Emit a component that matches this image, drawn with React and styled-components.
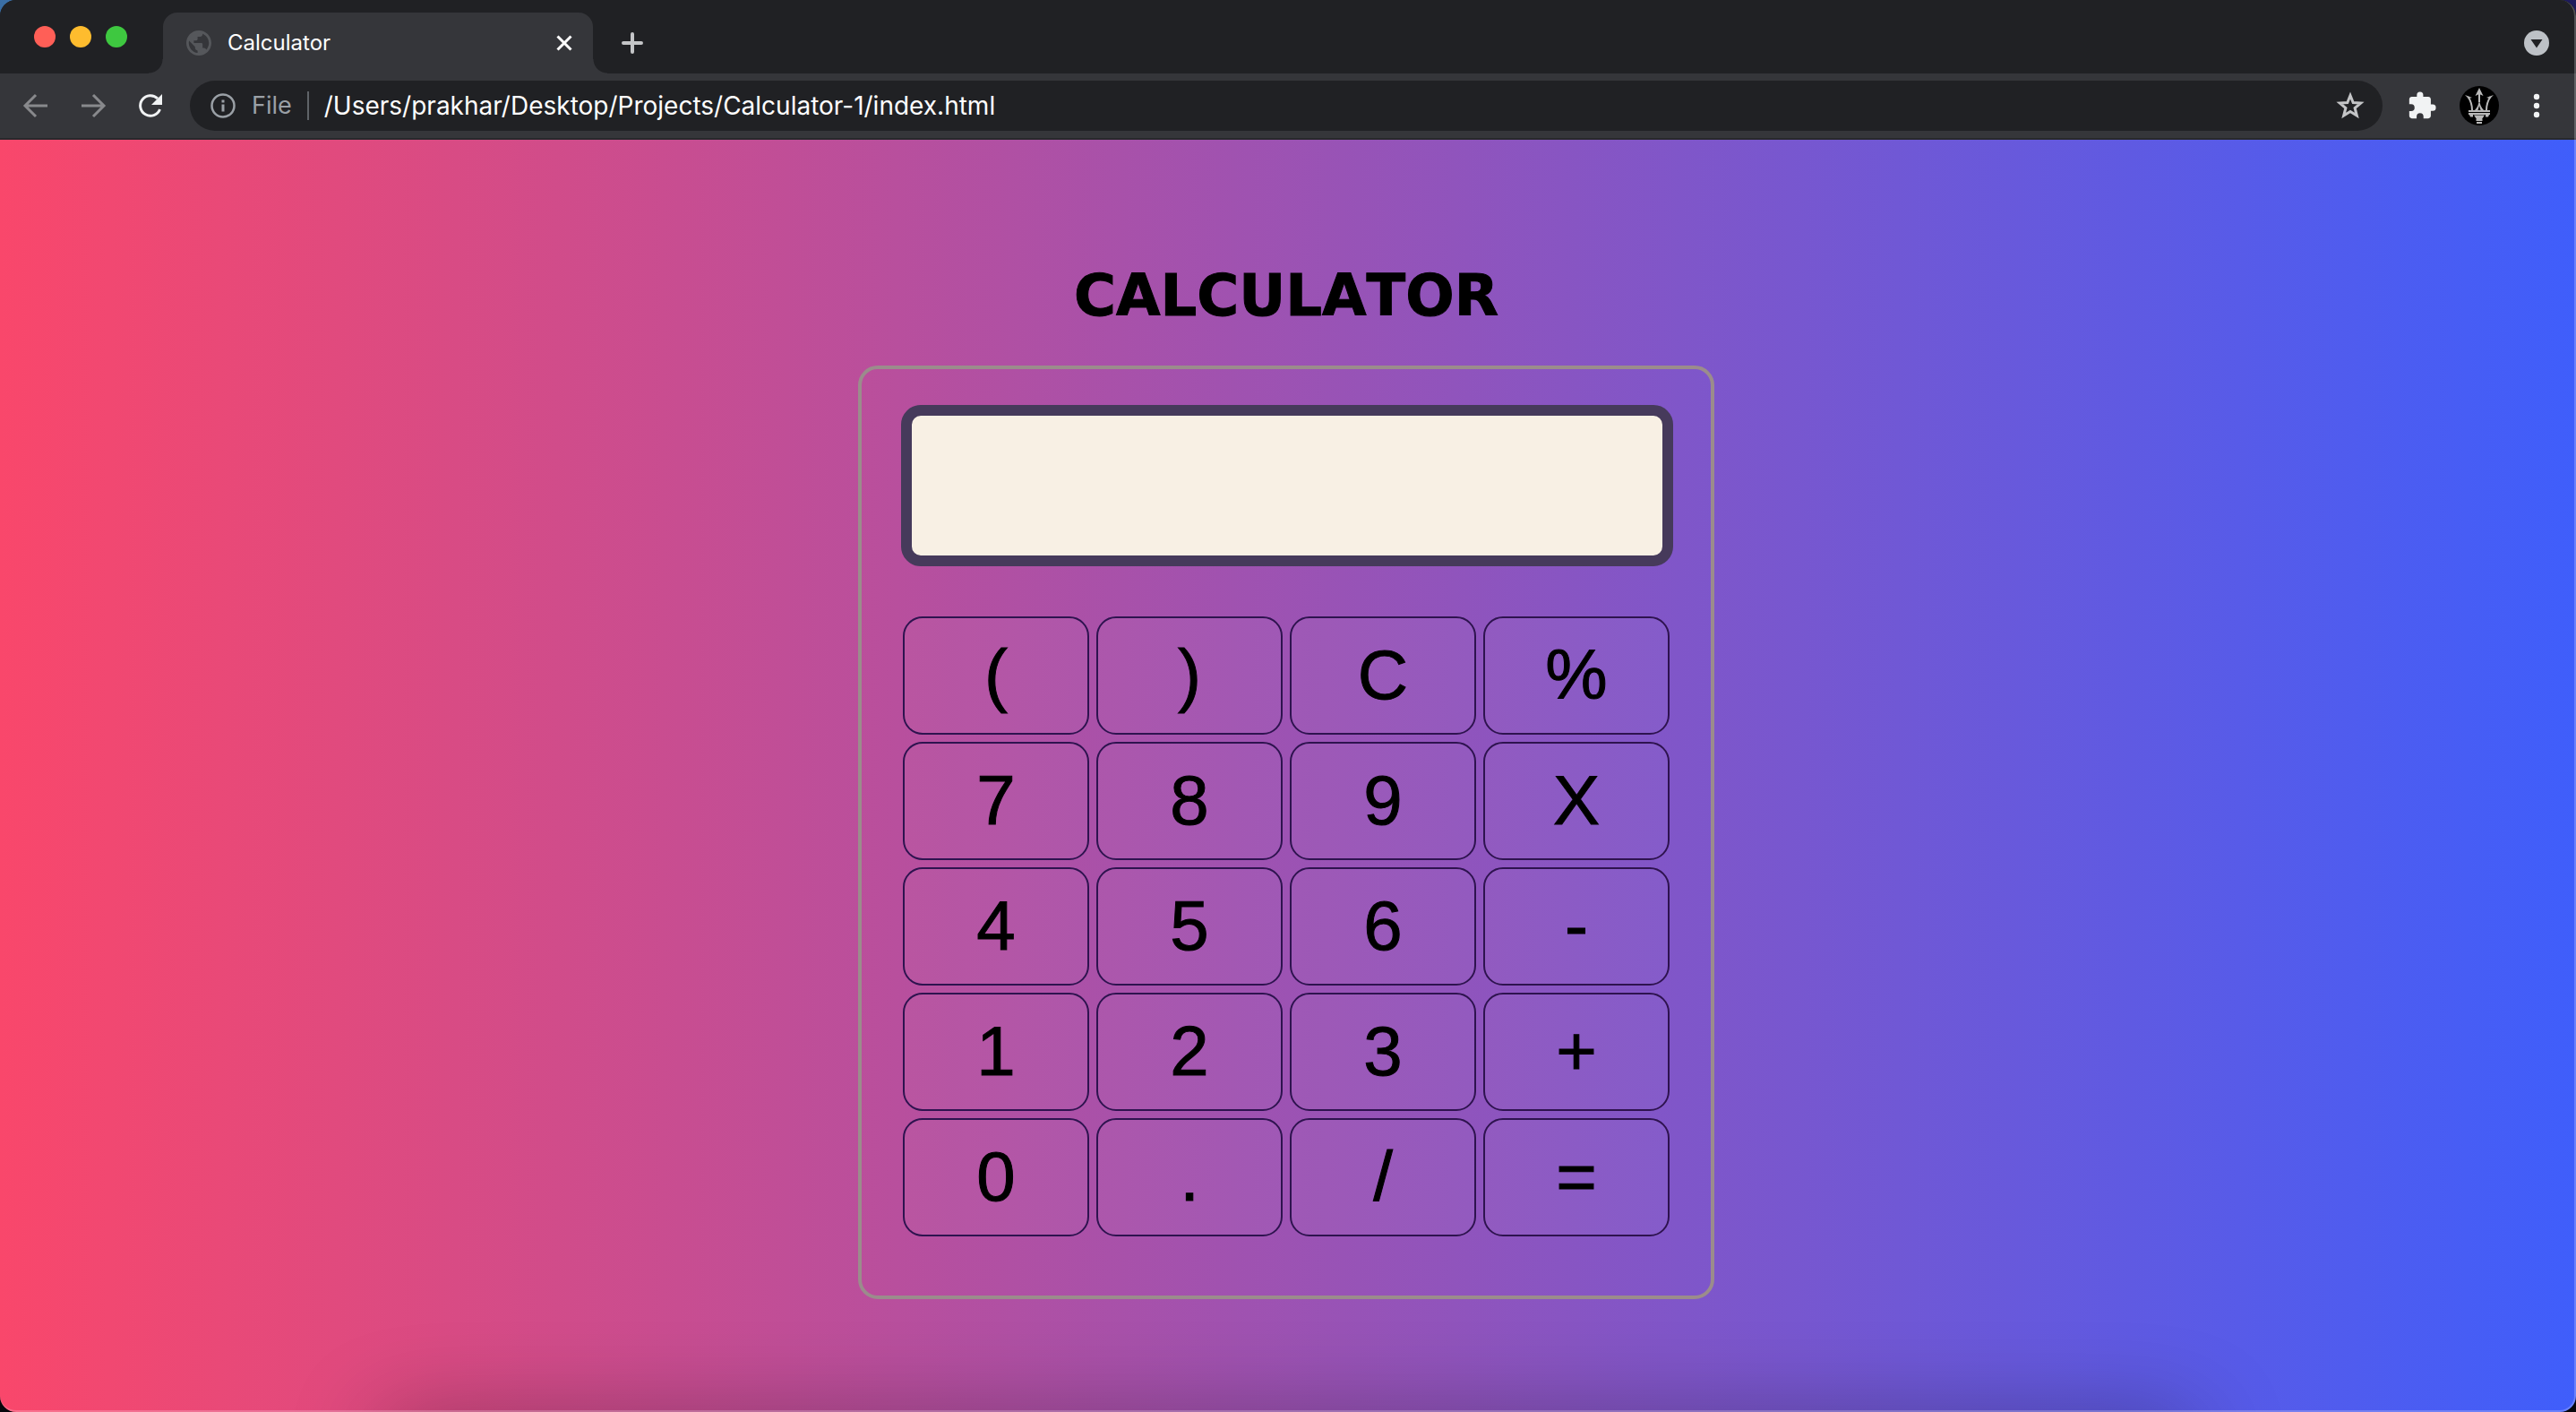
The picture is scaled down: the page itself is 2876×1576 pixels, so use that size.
import React, { useState } from 'react';
import styled, { createGlobalStyle } from 'styled-components';

const GlobalStyle = createGlobalStyle`
  *, *::before, *::after { box-sizing: border-box; }
  body {
    margin: 0;
    background: linear-gradient(to bottom, transparent, #07060c 50%),
      linear-gradient(to right, #3a6ea5, #1d1a5c);
  }
`;

const ui = `Inter, "Liberation Sans", sans-serif`;

const Window = styled.div`
  position: relative;
  display: flex;
  flex-direction: column;
  min-height: 100vh;
  overflow: hidden;
  border-radius: 18px;
  font-family: ${ui};
  background: #202124;

  &::after {
    content: '';
    position: absolute;
    inset: 0;
    border: 2px solid rgba(255, 255, 255, 0.22);
    border-left: 0;
    border-top: 0;
    border-radius: 18px;
    pointer-events: none;
  }
`;

const TabStrip = styled.header`
  display: flex;
  align-items: flex-end;
  height: 82px;
  padding: 0 30px 0 38px;
  background: #202124;
`;

const WindowControls = styled.div`
  display: flex;
  align-self: center;
  gap: 16px;
  margin-right: 40px;
`;

const ControlDot = styled.button`
  width: 24px;
  height: 24px;
  padding: 0;
  border: 0;
  border-radius: 50%;
  background: ${(p) => p.$color};
`;

const Tab = styled.div`
  position: relative;
  display: flex;
  align-items: center;
  gap: 18px;
  width: 480px;
  height: 68px;
  padding: 0 22px 0 26px;
  border-radius: 16px 16px 0 0;
  background: #35363a;

  &::before,
  &::after {
    content: '';
    position: absolute;
    bottom: 0;
    width: 16px;
    height: 16px;
  }
  &::before {
    left: -16px;
    background: radial-gradient(circle at 0 0, transparent 15px, #35363a 16px);
  }
  &::after {
    right: -16px;
    background: radial-gradient(circle at 100% 0, transparent 15px, #35363a 16px);
  }
`;

const TabTitle = styled.span`
  flex: 1;
  font-size: 24px;
  line-height: 32px;
  font-weight: 400;
  color: #fff;
`;

const IconButton = styled.button`
  display: grid;
  place-items: center;
  flex: none;
  width: ${(p) => p.$size || 40}px;
  height: ${(p) => p.$size || 40}px;
  padding: 0;
  border: 0;
  background: none;
`;

const NewTab = styled(IconButton)`
  margin: 0 auto 14px 24px;
`;

const TabSearch = styled(IconButton)`
  margin-bottom: 20px;
`;

const Toolbar = styled.nav`
  display: flex;
  align-items: center;
  height: 74px;
  padding: 0 24px 0 20px;
  background: #35363a;
  border-bottom: 2px solid #28292c;
`;

const NavButtons = styled.div`
  display: flex;
  gap: 24px;
  margin-right: 24px;
`;

const Omnibox = styled.form`
  display: flex;
  align-items: center;
  flex: 1;
  height: 56px;
  padding: 0 20px 0 23px;
  border-radius: 28px;
  background: #202124;
`;

const Scheme = styled.label`
  display: flex;
  align-items: center;
  gap: 18px;
  height: 32px;
  padding-right: 17px;
  border-right: 2px solid #5f6368;
  font-size: 27px;
  line-height: 32px;
  color: #9aa0a6;
`;

const Address = styled.input`
  flex: 1;
  min-width: 0;
  height: 40px;
  padding: 0 0 0 17px;
  border: 0;
  outline: 0;
  background: none;
  font: 400 28px/40px ${ui};
  color: #fff;
`;

const ToolbarActions = styled.div`
  display: flex;
  align-items: center;
  gap: 22px;
  margin-left: 24px;
`;

const Page = styled.main`
  position: relative;
  display: flex;
  flex: 1;
  flex-direction: column;
  align-items: center;
  padding: 136px 4px 120px 0;
  overflow: hidden;
  background: linear-gradient(to right, #f9476b, #3f5efb);

  &::after {
    content: '';
    position: absolute;
    left: 15%;
    right: 15%;
    bottom: -60px;
    height: 40px;
    border-radius: 20px;
    box-shadow: 0 0 100px 10px rgba(0, 0, 0, 0.38);
    pointer-events: none;
  }
`;

const Title = styled.h1`
  margin: 0 0 40px;
  font: 700 64px/76px "DejaVu Sans", Verdana, sans-serif;
  font-kerning: none;
  -webkit-text-stroke: 1px #000;
  color: #000;
`;

const Calculator = styled.section`
  display: flex;
  flex-direction: column;
  align-items: center;
  gap: 56px;
  width: 956px;
  padding: 40px 42px 66px 44px;
  border: 4px solid #9b8c8c;
  border-radius: 22px;
`;

const Display = styled.input`
  width: 100%;
  height: 180px;
  padding: 0 24px;
  border: 12px solid #463a5b;
  border-radius: 22px;
  outline: 0;
  background: #f8f0e4;
  font: 80px "Liberation Sans", Arial, sans-serif;
  text-align: right;
`;

const Keypad = styled.div`
  display: grid;
  grid-template-columns: repeat(4, 208px);
  grid-auto-rows: 132px;
  gap: 8px;
  margin-right: 2px;
`;

const Key = styled.button`
  padding: 0 0 2px;
  border: 2px solid #2e134f;
  border-radius: 22px;
  background: rgba(255, 255, 255, 0.04);
  font: 78px/92px "Liberation Sans", Arial, sans-serif;
  -webkit-text-stroke: 1px #000;
  color: #000;
`;

const Svg = ({ size = 32, children, ...rest }) => (
  <svg width={size} height={size} viewBox={`0 0 ${size} ${size}`} fill="none" aria-hidden="true" {...rest}>
    {children}
  </svg>
);

const Globe = () => (
  <svg width="28" height="28" viewBox="2 2 20 20" fill="#55575b" aria-hidden="true">
    <path d="M12 2C6.48 2 2 6.48 2 12s4.48 10 10 10 10-4.48 10-10S17.52 2 12 2zm-1 17.93c-3.95-.49-7-3.85-7-7.93 0-.62.08-1.21.21-1.79L9 15v1c0 1.100.9 2 2 2v1.930zm6.900-2.540c-.26-.81-1-1.390-1.900-1.390h-1v-3c0-.55-.45-1-1-1H8v-2h2c.55 0 1-.45 1-1V7h2c1.100 0 2-.9 2-2v-.41c2.930 1.190 5 4.060 5 7.410 0 2.080-.8 3.970-2.100 5.390z" />
  </svg>
);

const Back = () => (
  <Svg stroke="#88898c" strokeWidth="3">
    <path d="M29 16H5M16 4L4 16l12 12" />
  </Svg>
);

const Forward = () => (
  <Svg stroke="#88898c" strokeWidth="3">
    <path d="M3 16h24M16 4l12 12-12 12" />
  </Svg>
);

const Reload = () => (
  <Svg>
    <path d="M26.500 20A11.300 11.300 0 1 1 24 8" stroke="#f1f3f4" strokeWidth="3" />
    <path d="M29 3v12H17z" fill="#f1f3f4" />
  </Svg>
);

const Info = () => (
  <Svg size={28}>
    <circle cx="14" cy="14" r="12.500" stroke="#9aa0a6" strokeWidth="2.500" />
    <path d="M14 12.500v8M14 7.500v3" stroke="#9aa0a6" strokeWidth="3" />
  </Svg>
);

const Star = () => (
  <Svg stroke="#c4c5c7" strokeWidth="3">
    <path d="M16 4.500l3.200 8 8.500.6-6.600 5.400 2.200 8.500-7.300-4.600L8.700 27l2.200-8.500-6.600-5.400 8.500-.6z" />
  </Svg>
);

const Puzzle = () => (
  <svg width="34" height="34" viewBox="0 0 24 24" fill="#f1f3f4" aria-hidden="true">
    <path d="M20.500 11H19V7c0-1.100-.9-2-2-2h-4V3.500a2.500 2.500 0 0 0-5 0V5H4c-1.100 0-2 .9-2 2v3.800h1.500a2.700 2.700 0 0 1 0 5.400H2V20c0 1.100.9 2 2 2h3.800v-1.500a2.700 2.700 0 0 1 5.400 0V22H17c1.100 0 2-.9 2-2v-4h1.500a2.500 2.500 0 0 0 0-5z" />
  </svg>
);

const Trident = () => (
  <Svg size={44}>
    <circle cx="22" cy="22" r="22" fill="#000" />
    <g stroke="#b9b9b9" strokeWidth="2">
      <path d="M22 4v14M14 27c0-6-1.500-10.500-4.500-15M30 27c0-6 1.500-10.500 4.500-15" />
      <path d="M10 28h24M10 31h24" />
      <path d="M18.500 38h7M19 41h6" />
    </g>
    <path d="M22 15c.5 5 2 9 5 12h-3.500L22 22l-1.500 5H17c3-3 4.500-7 5-12z" fill="#b9b9b9" />
    <path d="M22 2l4.500 9-4.500-2-4.500 2zM6 10l8 3-4 1zM38 10l-8 3 4 1zM11 32h4v2.500h-3zM29 32h4l-1 2.500h-3zM16 32.500h12l-3 4.500h-6z" fill="#b9b9b9" />
  </Svg>
);

const Dots = () => (
  <Svg fill="#f1f3f4">
    <circle cx="16" cy="6" r="3.200" />
    <circle cx="16" cy="16" r="3.200" />
    <circle cx="16" cy="26" r="3.200" />
  </Svg>
);

const keys = [
  '(', ')', 'C', '%',
  '7', '8', '9', 'X',
  '4', '5', '6', '-',
  '1', '2', '3', '+',
  '0', '.', '/', '=',
];

function evaluate(expression) {
  try {
    const result = Function(`"use strict"; return (${expression.replace(/X/g, '*')})`)();
    return String(result);
  } catch {
    return 'Error';
  }
}

export default function App() {
  const [value, setValue] = useState('');

  const press = (key) => {
    if (key === 'C') setValue('');
    else if (key === '=') setValue(value ? evaluate(value) : '');
    else setValue(value + key);
  };

  return (
    <>
      <GlobalStyle />
      <Window>
        <TabStrip>
          <WindowControls>
            <ControlDot $color="#ff5f57" aria-label="Close window" />
            <ControlDot $color="#febc2e" aria-label="Minimize window" />
            <ControlDot $color="#3ec840" aria-label="Zoom window" />
          </WindowControls>
          <Tab>
            <Globe />
            <TabTitle>Calculator</TabTitle>
            <IconButton $size={20} aria-label="Close tab">
              <Svg size={20} stroke="#fff" strokeWidth="3">
                <path d="M2.500 2.500l15 15M17.500 2.500l-15 15" />
              </Svg>
            </IconButton>
          </Tab>
          <NewTab aria-label="New tab">
            <Svg size={24} stroke="#c4c5c7" strokeWidth="4" strokeLinecap="round">
              <path d="M12 2v20M2 12h20" />
            </Svg>
          </NewTab>
          <TabSearch $size={28} aria-label="Search tabs">
            <Svg size={28}>
              <circle cx="14" cy="14" r="14" fill="#bdc1c6" />
              <path d="M7.500 10h13L14 19.500z" fill="#202124" />
            </Svg>
          </TabSearch>
        </TabStrip>
        <Toolbar>
          <NavButtons>
            <IconButton aria-label="Back"><Back /></IconButton>
            <IconButton aria-label="Forward"><Forward /></IconButton>
            <IconButton aria-label="Reload"><Reload /></IconButton>
          </NavButtons>
          <Omnibox onSubmit={(e) => e.preventDefault()}>
            <Scheme htmlFor="address"><Info />File</Scheme>
            <Address id="address" defaultValue="/Users/prakhar/Desktop/Projects/Calculator-1/index.html" />
            <IconButton type="button" $size={32} aria-label="Bookmark this page"><Star /></IconButton>
          </Omnibox>
          <ToolbarActions>
            <IconButton aria-label="Extensions"><Puzzle /></IconButton>
            <IconButton $size={44} aria-label="Profile"><Trident /></IconButton>
            <IconButton aria-label="Menu"><Dots /></IconButton>
          </ToolbarActions>
        </Toolbar>
        <Page>
          <Title>CALCULATOR</Title>
          <Calculator>
            <Display aria-label="Result" value={value} onChange={(e) => setValue(e.target.value)} />
            <Keypad>
              {keys.map((key) => (
                <Key key={key} type="button" onClick={() => press(key)}>{key}</Key>
              ))}
            </Keypad>
          </Calculator>
        </Page>
      </Window>
    </>
  );
}
